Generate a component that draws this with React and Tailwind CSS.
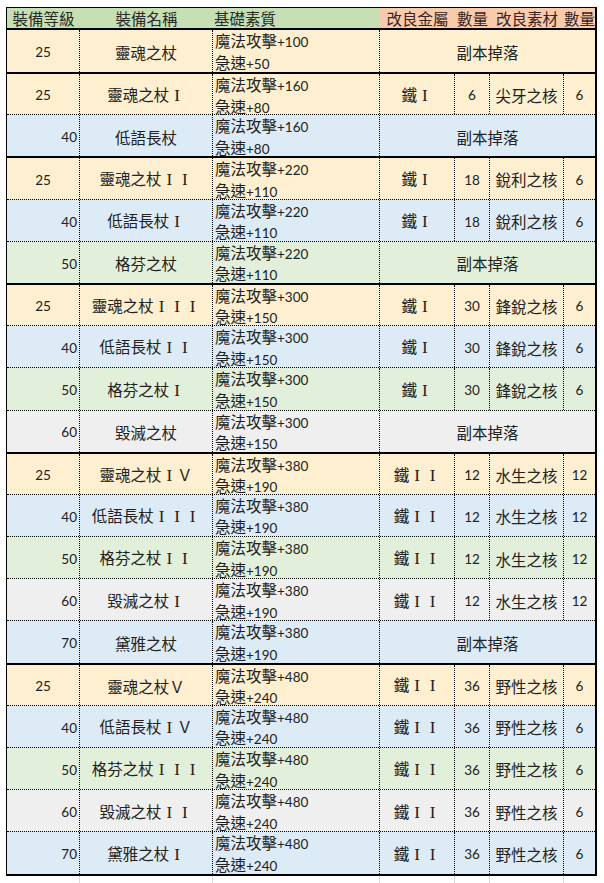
import React from "react";

const BG = {
  p: "bg-[#fdefcf]",
  b: "bg-[#ddebf7]",
  g: "bg-[#e2efda]",
  s: "bg-[#efefef]",
};

const rows = [
  { lv: "25", name: "靈魂之杖", atk: "100", spd: "50", c: "p", top: true },
  { lv: "25", name: "靈魂之杖Ⅰ", atk: "160", spd: "80", metal: "鐵Ⅰ", mq: "6", mat: "尖牙之核", q: "6", c: "p", top: true },
  { lv: "40", name: "低語長杖", atk: "160", spd: "80", c: "b" },
  { lv: "25", name: "靈魂之杖ⅠⅠ", atk: "220", spd: "110", metal: "鐵Ⅰ", mq: "18", mat: "銳利之核", q: "6", c: "p", top: true },
  { lv: "40", name: "低語長杖Ⅰ", atk: "220", spd: "110", metal: "鐵Ⅰ", mq: "18", mat: "銳利之核", q: "6", c: "b" },
  { lv: "50", name: "格芬之杖", atk: "220", spd: "110", c: "g" },
  { lv: "25", name: "靈魂之杖ⅠⅠⅠ", atk: "300", spd: "150", metal: "鐵Ⅰ", mq: "30", mat: "鋒銳之核", q: "6", c: "p", top: true },
  { lv: "40", name: "低語長杖ⅠⅠ", atk: "300", spd: "150", metal: "鐵Ⅰ", mq: "30", mat: "鋒銳之核", q: "6", c: "b" },
  { lv: "50", name: "格芬之杖Ⅰ", atk: "300", spd: "150", metal: "鐵Ⅰ", mq: "30", mat: "鋒銳之核", q: "6", c: "g" },
  { lv: "60", name: "毀滅之杖", atk: "300", spd: "150", c: "s" },
  { lv: "25", name: "靈魂之杖ⅠＶ", atk: "380", spd: "190", metal: "鐵ⅠⅠ", mq: "12", mat: "水生之核", q: "12", c: "p", top: true },
  { lv: "40", name: "低語長杖ⅠⅠⅠ", atk: "380", spd: "190", metal: "鐵ⅠⅠ", mq: "12", mat: "水生之核", q: "12", c: "b" },
  { lv: "50", name: "格芬之杖ⅠⅠ", atk: "380", spd: "190", metal: "鐵ⅠⅠ", mq: "12", mat: "水生之核", q: "12", c: "g" },
  { lv: "60", name: "毀滅之杖Ⅰ", atk: "380", spd: "190", metal: "鐵ⅠⅠ", mq: "12", mat: "水生之核", q: "12", c: "s" },
  { lv: "70", name: "黛雅之杖", atk: "380", spd: "190", c: "b" },
  { lv: "25", name: "靈魂之杖Ｖ", atk: "480", spd: "240", metal: "鐵ⅠⅠ", mq: "36", mat: "野性之核", q: "6", c: "p", top: true },
  { lv: "40", name: "低語長杖ⅠＶ", atk: "480", spd: "240", metal: "鐵ⅠⅠ", mq: "36", mat: "野性之核", q: "6", c: "b" },
  { lv: "50", name: "格芬之杖ⅠⅠⅠ", atk: "480", spd: "240", metal: "鐵ⅠⅠ", mq: "36", mat: "野性之核", q: "6", c: "g" },
  { lv: "60", name: "毀滅之杖ⅠⅠ", atk: "480", spd: "240", metal: "鐵ⅠⅠ", mq: "36", mat: "野性之核", q: "6", c: "s" },
  { lv: "70", name: "黛雅之杖Ⅰ", atk: "480", spd: "240", metal: "鐵ⅠⅠ", mq: "36", mat: "野性之核", q: "6", c: "b" },
];

const dot = "border-r border-dotted border-black";
const num = "font-['Lato'] text-[13.5px]";

// roman "I" drawn as a serif letter in a full-width box, like the sheet's font
const Label = ({ text }) => (
  <span className="whitespace-nowrap">
    {[...text].map((ch, i) =>
      ch === "Ⅰ" ? (
        <span
          key={i}
          className="inline-block w-[15.5px] text-center font-['Liberation_Serif'] text-[17px]"
        >
          I
        </span>
      ) : (
        <span key={i}>{ch}</span>
      )
    )}
  </span>
);

const Row = ({ r, first }) => {
  const line = r.top
    ? "border-t-2 border-solid border-black"
    : "border-t border-dotted border-black";
  return (
    <div className={`flex ${first ? "h-[44px]" : "h-[42.2px]"} ${line} ${BG[r.c]}`}>
      <div
        className={`w-[73px] flex items-center pt-[3px] ${dot} ${
          r.lv === "25" ? "justify-center" : "justify-end pr-[2px]"
        }`}
      >
        <span className={num}>{r.lv}</span>
      </div>
      <div className={`w-[133px] flex items-center justify-center pt-[3px] ${dot}`}>
        <Label text={r.name} />
      </div>
      <div className={`w-[167px] flex flex-col pl-[2px] leading-[19.5px] pt-[1px] ${dot}`}>
        <div>
          魔法攻擊<span className={num}>+{r.atk}</span>
        </div>
        <div>
          急速<span className={num}>+{r.spd}</span>
        </div>
      </div>
      {r.metal ? (
        <>
          <div className={`w-[75px] flex items-center justify-center pt-[3px] ${dot}`}>
            <Label text={r.metal} />
          </div>
          <div className={`w-[35px] flex items-center justify-center pt-[3px] ${dot}`}>
            <span className={num}>{r.mq}</span>
          </div>
          <div className={`w-[74px] flex items-center justify-center pt-[3px] ${dot}`}>
            {r.mat}
          </div>
          <div className="w-[31px] flex items-center justify-center pt-[3px]">
            <span className={num}>{r.q}</span>
          </div>
        </>
      ) : (
        <div className="w-[215px] flex items-center justify-center pt-[3px]">
          副本掉落
        </div>
      )}
    </div>
  );
};

export default function App() {
  return (
    <div className="w-[604px] h-[883px] bg-white overflow-hidden pl-[6px] pt-[7px] font-['Noto_Sans_CJK_TC',sans-serif] text-[15.5px] text-[#222]">
      <div className="w-[591px] border-l border-r-2 border-b-2 border-t border-black">
        <div className="flex h-[20px] leading-[20px]">
          <div className="flex bg-[#c6e0b4] text-[#2a2a2a]">
            <div className="w-[73px] text-center">裝備等級</div>
            <div className="w-[133px] text-center">裝備名稱</div>
            <div className="w-[167px] pl-[1px]">基礎素質</div>
          </div>
          <div className="flex bg-[#f8cbad] text-[#3a2424]">
            <div className="w-[75px] text-center">改良金屬</div>
            <div className="w-[35px] text-center">數量</div>
            <div className="w-[74px] text-center">改良素材</div>
            <div className="w-[31px] text-center">數量</div>
          </div>
        </div>
        {rows.map((r, i) => (
          <Row key={i} r={r} first={i === 0} />
        ))}
      </div>
      <div className="flex h-[10px] ml-[1px]">
        <div className="w-[73px] border-r border-[#dadada]" />
        <div className="w-[133px] border-r border-[#dadada]" />
        <div className="w-[167px] border-r border-[#dadada]" />
        <div className="w-[75px] border-r border-[#dadada]" />
        <div className="w-[35px] border-r border-[#dadada]" />
        <div className="w-[74px] border-r border-[#dadada]" />
      </div>
    </div>
  );
}
